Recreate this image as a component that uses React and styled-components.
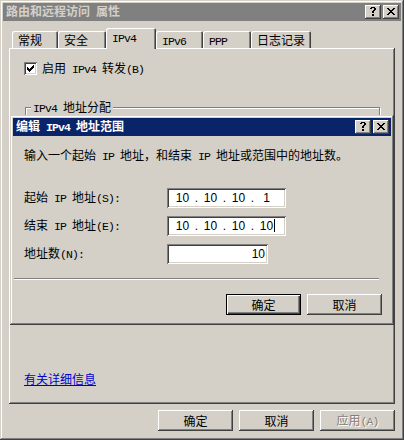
import React from "react";
import styled, { createGlobalStyle, css } from "styled-components";

const FACE = "#d4d0c8";

const GlobalStyle = createGlobalStyle`
  html, body { margin: 0; padding: 0; background: ${FACE}; }
  body {
    font-family: "Noto Sans CJK SC", "Liberation Sans", sans-serif;
    font-size: 12px;
    line-height: 14px;
    color: #000;
  }
  * { box-sizing: border-box; }
`;

const raised = css`
  box-shadow: inset -1px -1px #404040, inset 1px 1px #ffffff,
    inset -2px -2px #808080, inset 2px 2px ${FACE};
`;
const frame = css`
  box-shadow: inset -1px -1px #404040, inset 1px 1px ${FACE},
    inset -2px -2px #808080, inset 2px 2px #ffffff;
`;
const sunken = css`
  box-shadow: inset 1px 1px #808080, inset -1px -1px #ffffff,
    inset 2px 2px #404040, inset -2px -2px ${FACE};
`;

/* Latin run in the half-width style of the CJK system font */
const Lat = styled.span`
  font-family: "Liberation Mono", monospace;
  font-size: 11.5px;
  letter-spacing: -0.9px;
  white-space: pre;
`;

const Window = styled.div`
  position: relative;
  width: 404px;
  height: 440px;
  background: ${FACE};
  padding: 3px;
  ${frame}
  display: flex;
  flex-direction: column;
`;

const TitleBar = styled.div`
  height: 18px;
  flex: none;
  display: flex;
  align-items: center;
  justify-content: space-between;
  padding: 0 2px 0 2px;
  background: ${(p) => (p.$active ? "#0a246a" : "#808080")};
  color: ${(p) => (p.$active ? "#ffffff" : FACE)};
  font-weight: bold;
`;

const TitleText = styled.span`
  white-space: nowrap;
  padding-left: 1px;
`;

const CapButtons = styled.div`
  display: flex;
  gap: 2px;
`;

const CapBtn = styled.div`
  width: 16px;
  height: 14px;
  background: ${FACE};
  ${raised}
  display: flex;
  align-items: center;
  justify-content: center;
  padding-bottom: 1px;
`;

const HelpGlyph = () => (
  <svg width="6" height="9" viewBox="0 0 6 9" shapeRendering="crispEdges">
    <path
      fill="#000"
      d="M1 0h4v1h-4z M0 1h2v1h-2z M4 1h2v1h-2z M4 2h2v1h-2z M3 3h2v1h-2z M2 4h2v2h-2z M2 7h2v2h-2z"
    />
  </svg>
);

const CloseGlyph = () => (
  <svg width="8" height="7" viewBox="0 0 8 7" shapeRendering="crispEdges">
    <path
      fill="#000"
      d="M0 0h2v1h-2z M6 0h2v1h-2z M1 1h2v1h-2z M5 1h2v1h-2z M2 2h4v1h-4z M3 3h2v1h-2z M2 4h4v1h-4z M1 5h2v1h-2z M5 5h2v1h-2z M0 6h2v1h-2z M6 6h2v1h-2z"
    />
  </svg>
);

const Body = styled.div`
  flex: 1;
  display: flex;
  flex-direction: column;
  padding: 7px 6px 0 6px;
`;

const TabStrip = styled.div`
  height: 20px;
  display: flex;
  align-items: flex-end;
  padding-left: 3px;
  position: relative;
  z-index: 1;
`;

const Tab = styled.div`
  width: ${(p) => p.$w}px;
  height: ${(p) => (p.$sel ? 21 : 17)}px;
  margin-bottom: ${(p) => (p.$sel ? -1 : 0)}px;
  padding: 2px 0 0 6px;
  background: ${FACE};
  border-top-left-radius: 2px;
  border-top-right-radius: 2px;
  box-shadow: inset 1px 1px #ffffff, inset -1px 0 #404040, inset -2px 0 #808080;
  white-space: nowrap;
`;

const TabPanel = styled.div`
  height: 356px;
  ${raised}
  padding: 14px 16px 18px 15px;
  display: flex;
  flex-direction: column;
`;

const CheckRow = styled.label`
  display: flex;
  align-items: center;
  gap: 5px;
  height: 13px;
`;

const CheckBox = styled.span`
  width: 13px;
  height: 13px;
  background: #fff;
  ${sunken}
  display: flex;
  align-items: center;
  justify-content: center;
`;

const CheckGlyph = () => (
  <svg width="7" height="7" viewBox="0 0 7 7" shapeRendering="crispEdges">
    <path
      fill="#000"
      d="M6 0h1v1h-1z M5 1h2v1h-2z M0 2h1v1h-1z M4 2h3v1h-3z M0 3h2v1h-2z M3 3h3v1h-3z M0 4h5v1h-5z M1 5h3v1h-3z M2 6h1v1h-1z"
    />
  </svg>
);

const GroupBox = styled.div`
  margin: 32px 0 0 1px;
  width: 355px;
  height: 180px;
  border: 1px solid #808080;
  box-shadow: 1px 1px 0 #ffffff, inset 1px 1px 0 #ffffff;
  padding: 0 5px;
`;

const Legend = styled.div`
  width: fit-content;
  margin-top: -8px;
  padding: 0 2px;
  background: ${FACE};
`;

const Link = styled.a`
  margin-top: auto;
  color: #0000cc;
  text-decoration: underline;
  cursor: pointer;
`;

const ButtonRow = styled.div`
  display: flex;
  justify-content: flex-end;
  gap: 6px;
  margin-top: ${(p) => p.$top}px;
`;

const Button = styled.button`
  width: 75px;
  height: 21px;
  padding: 0;
  border: 0;
  background: ${FACE};
  font: inherit;
  color: ${(p) => (p.disabled ? "#808080" : "#000")};
  text-shadow: ${(p) => (p.disabled ? "1px 1px 0 #ffffff" : "none")};
  box-shadow: ${(p) =>
    p.$default
      ? "inset 1px 1px #000, inset -1px -1px #000, inset 2px 2px #fff, inset -2px -2px #404040, inset -3px -3px #808080"
      : `inset -1px -1px #404040, inset 1px 1px #ffffff, inset -2px -2px #808080, inset 2px 2px ${FACE}`};
`;

const Dialog = styled.div`
  position: absolute;
  left: 10px;
  top: 115px;
  width: 384px;
  height: 210px;
  background: ${FACE};
  padding: 3px;
  ${frame}
  display: flex;
  flex-direction: column;
  z-index: 5;
`;

const DialogBody = styled.div`
  padding: 12px 9px 0 11px;
  display: flex;
  flex-direction: column;
`;

const Desc = styled.div`
  white-space: nowrap;
`;

const Form = styled.div`
  margin-top: 24px;
  display: flex;
  flex-direction: column;
  gap: 8px;
`;

const FieldRow = styled.div`
  display: flex;
  align-items: center;
  height: 20px;
`;

const FieldLabel = styled.span`
  width: 143px;
  white-space: nowrap;
`;

const TextBox = styled.div`
  width: ${(p) => p.$w}px;
  height: 20px;
  background: #fff;
  ${sunken}
  display: flex;
  align-items: center;
  justify-content: ${(p) => (p.$right ? "flex-end" : "flex-start")};
  padding: ${(p) => (p.$right ? "0 3px 0 0" : "0 0 0 5px")};
  font-family: "Liberation Sans", Arial, sans-serif;
  font-size: 12px;
`;

const Seg = styled.span`
  width: 21px;
  text-align: center;
  white-space: nowrap;
`;

const Dot = styled.span`
  width: 7px;
  text-align: center;
`;

const Caret = styled.span`
  display: inline-block;
  width: 1px;
  height: 13px;
  background: #000;
  margin-left: 1px;
  margin-right: -2px;
  vertical-align: -2px;
`;

const Separator = styled.div`
  margin: 14px 3px 0 -10px;
  height: 2px;
  border-top: 1px solid #808080;
  border-bottom: 1px solid #ffffff;
`;

const IpBox = ({ parts, caret }) => (
  <TextBox $w={119}>
    {parts.map((p, i) => (
      <React.Fragment key={i}>
        {i > 0 && <Dot>.</Dot>}
        <Seg>
          {p}
          {caret && i === parts.length - 1 && <Caret />}
        </Seg>
      </React.Fragment>
    ))}
  </TextBox>
);

const tabs = [
  { label: "常规", w: 46 },
  { label: "安全", w: 48 },
  { label: <Lat>IPv4</Lat>, w: 50, sel: true },
  { label: <Lat>IPv6</Lat>, w: 47 },
  { label: <Lat>PPP</Lat>, w: 48 },
  { label: "日志记录", w: 60 },
];

export default function App() {
  return (
    <>
      <GlobalStyle />
      <Window>
        <TitleBar>
          <TitleText>
            路由和远程访问<Lat> </Lat>属性
          </TitleText>
          <CapButtons>
            <CapBtn>
              <HelpGlyph />
            </CapBtn>
            <CapBtn>
              <CloseGlyph />
            </CapBtn>
          </CapButtons>
        </TitleBar>
        <Body>
          <TabStrip>
            {tabs.map((t, i) => (
              <Tab key={i} $w={t.w} $sel={t.sel}>
                {t.label}
              </Tab>
            ))}
          </TabStrip>
          <TabPanel>
            <CheckRow>
              <CheckBox>
                <CheckGlyph />
              </CheckBox>
              <span>
                启用<Lat> IPv4 </Lat>转发<Lat>(B)</Lat>
              </span>
            </CheckRow>
            <GroupBox>
              <Legend>
                <Lat>IPv4 </Lat>地址分配
              </Legend>
            </GroupBox>
            <Link>有关详细信息</Link>
          </TabPanel>
          <ButtonRow $top={6}>
            <Button>确定</Button>
            <Button>取消</Button>
            <Button disabled>
              应用<Lat>(A)</Lat>
            </Button>
          </ButtonRow>
        </Body>

        <Dialog>
          <TitleBar $active>
            <TitleText>
              编辑<Lat> IPv4 </Lat>地址范围
            </TitleText>
            <CapButtons>
              <CapBtn>
                <HelpGlyph />
              </CapBtn>
              <CapBtn>
                <CloseGlyph />
              </CapBtn>
            </CapButtons>
          </TitleBar>
          <DialogBody>
            <Desc>
              输入一个起始<Lat> IP </Lat>地址，和结束<Lat> IP </Lat>地址或范围中的地址数。
            </Desc>
            <Form>
              <FieldRow>
                <FieldLabel>
                  起始<Lat> IP </Lat>地址<Lat>(S):</Lat>
                </FieldLabel>
                <IpBox parts={["10", "10", "10", "1"]} />
              </FieldRow>
              <FieldRow>
                <FieldLabel>
                  结束<Lat> IP </Lat>地址<Lat>(E):</Lat>
                </FieldLabel>
                <IpBox parts={["10", "10", "10", "10"]} caret />
              </FieldRow>
              <FieldRow>
                <FieldLabel>
                  地址数<Lat>(N):</Lat>
                </FieldLabel>
                <TextBox $w={101} $right>
                  10
                </TextBox>
              </FieldRow>
            </Form>
            <Separator />
            <ButtonRow $top={14}>
              <Button $default>确定</Button>
              <Button>取消</Button>
            </ButtonRow>
          </DialogBody>
        </Dialog>
      </Window>
    </>
  );
}
